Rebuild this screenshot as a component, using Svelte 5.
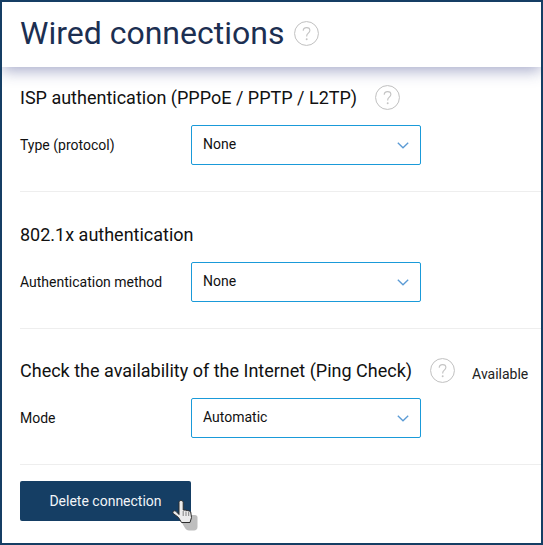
<script lang="ts">
    const sections = [
        { title: 'ISP authentication (PPPoE / PPTP / L2TP)', help: true, status: '', label: 'Type (protocol)', value: 'None' },
        { title: '802.1x authentication', help: false, status: '', label: 'Authentication method', value: 'None' },
        { title: 'Check the availability of the Internet (Ping Check)', help: true, status: 'Available', label: 'Mode', value: 'Automatic' }
    ];
</script>

{#snippet helpIcon(size: number)}
    <svg class="help" width={size} height={size} viewBox="0 0 26 26" aria-hidden="true">
        <circle cx="13" cy="13" r="12.4" fill="none" stroke="#bdbdbd" stroke-width="1" />
        <path d="M9.6 10.2c0-2 1.500-3.300 3.500-3.300s3.400 1.200 3.400 3c0 2.600-3.300 2.900-3.300 5.600v.6" fill="none" stroke="#c4c4c4" stroke-width="1.200" />
        <circle cx="13.200" cy="19" r="1" fill="#c4c4c4" />
    </svg>
{/snippet}

<div class="frame">
    <header class="head">
        <h1>Wired connections</h1>
        {@render helpIcon(25)}
    </header>

    <main class="content">
        {#each sections as s}
            <section class="block">
                <div class="block-title">
                    <h2>{s.title}</h2>
                    {#if s.help}
                        {@render helpIcon(25)}
                    {/if}
                    {#if s.status}
                        <span class="status">{s.status}</span>
                    {/if}
                </div>
                <div class="row">
                    <span class="label">{s.label}</span>
                    <div class="select">
                        <span class="value">{s.value}</span>
                        <svg width="12" height="7" viewBox="0 0 12 7" aria-hidden="true">
                            <path d="M.8.8 6 5.800 11.200.8" fill="none" stroke="#5b9bd5" stroke-width="1.300" />
                        </svg>
                    </div>
                </div>
            </section>
        {/each}

        <div class="actions">
            <button class="delete">Delete connection</button>
            <svg class="cursor" width="28" height="34" viewBox="0 0 28 34" aria-hidden="true">
                <path d="M14 16h9c1.500 0 2.500 1 2.500 2.500V28c0 2-1.500 3.500-3.500 3.500h-5c-2 0-3-1-4-2.500l-3-5z" fill="#a3a3a3" opacity=".7" />
                <path d="M7 3.500C7 2.300 7.800 1.500 9 1.500s2.200.8 2.200 2V11l2 .1 2 .4 2 .5 1.500.8.8 5.700-1.500 5H9.500l-3-5L1.300 14.500c-.8-1-.4-2 .5-2.500.8-.4 1.700-.2 2.400.6L7 15.500z" fill="#ececec" stroke="#2c2c2c" stroke-width="1" />
                <path d="M11.200 12v5M14 12.500v4.500M16.700 13v4" stroke="#666" stroke-width=".8" fill="none" />
            </svg>
        </div>
    </main>
</div>

<style>
    :global(body) {
        margin: 0;
        background: #fff;
    }

    .frame {
        box-sizing: border-box;
        width: 543px;
        height: 545px;
        border: 2px solid #153e64;
        background: #fff;
        font-family: Roboto, "Liberation Sans", sans-serif;
        color: #111;
        overflow: hidden;
    }

    .head {
        box-sizing: border-box;
        display: flex;
        align-items: center;
        gap: 10px;
        height: 65px;
        padding: 0 0 3px 18px;
        box-shadow: 0 4px 14px rgba(50, 60, 130, 0.42);
        position: relative;
    }

    h1 {
        margin: 0;
        font-size: 32px;
        font-weight: 400;
        color: #1c2f52;
    }

    .help {
        flex: none;
    }

    .content {
        padding-left: 18px;
    }

    .block {
        padding: 17px 0 26px;
        border-bottom: 1px solid #eee;
        margin-bottom: 12px;
    }

    .block + .block {
        margin-bottom: 11px;
    }

    .block-title {
        display: flex;
        align-items: center;
        height: 26px;
    }

    h2 {
        margin: 0;
        font-size: 18px;
        font-weight: 400;
        margin-right: 18px;
    }

    .status {
        margin: 8px 0 0 17px;
        font-size: 14px;
        color: #222;
    }

    .row {
        display: flex;
        align-items: center;
        margin-top: 15px;
    }

    .label {
        width: 171px;
        font-size: 14px;
    }

    .select {
        box-sizing: border-box;
        display: flex;
        align-items: center;
        justify-content: space-between;
        width: 230px;
        height: 40px;
        padding: 0 11px;
        border: 1px solid #1a9ad9;
        border-radius: 2px;
        font-size: 14px;
    }

    .value {
        margin-top: -2px;
    }

    .actions {
        position: relative;
        margin-top: 16px;
    }

    .delete {
        display: block;
        width: 171px;
        height: 40px;
        border: 0;
        border-radius: 2px;
        background: #153e64;
        color: #f2f5f8;
        font-family: inherit;
        font-size: 14px;
    }

    .cursor {
        position: absolute;
        left: 152px;
        top: 18px;
    }
</style>
